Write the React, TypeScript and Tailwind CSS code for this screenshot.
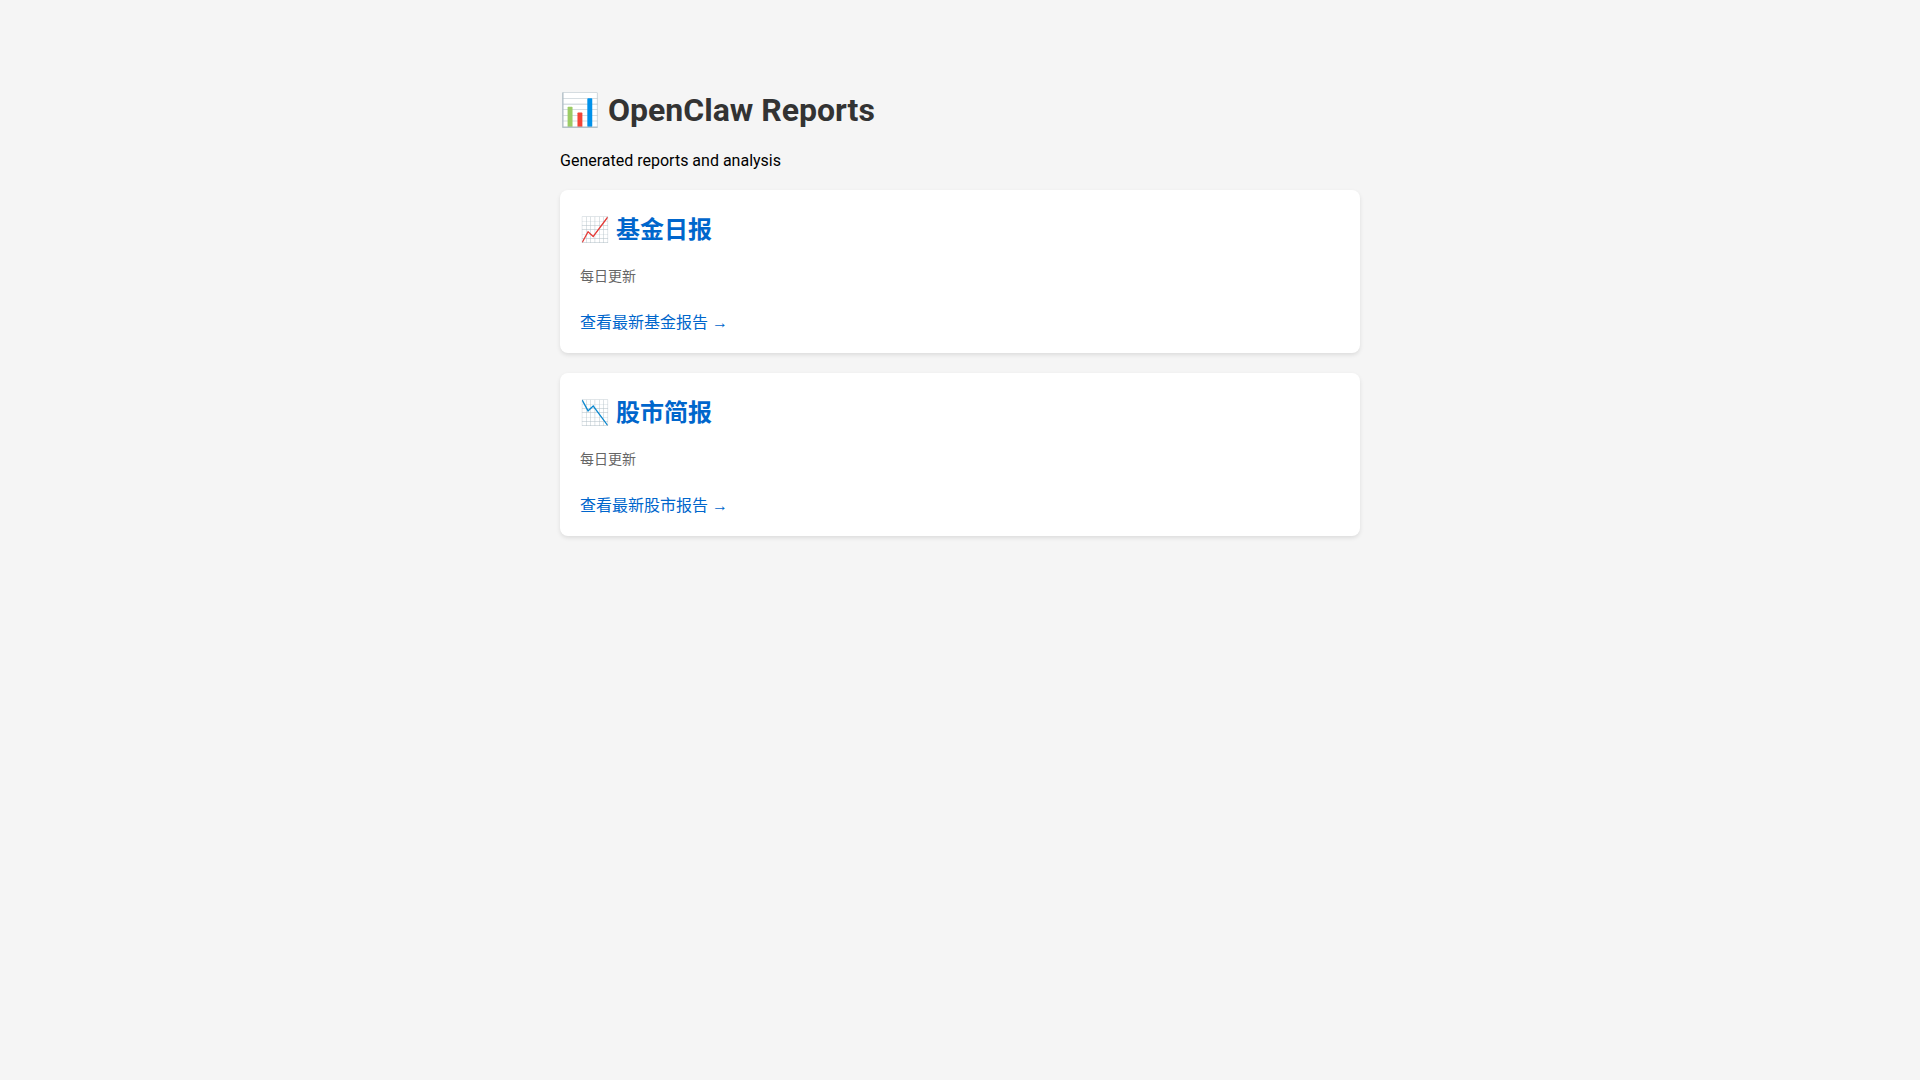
const reports = [
  { icon: "📈", title: "基金日报", linkText: "查看最新基金报告 →", href: "#fund" },
  { icon: "📉", title: "股市简报", linkText: "查看最新股市报告 →", href: "#stock" },
];

export default function App() {
  return (
    <div
      lang="zh-CN"
      className="min-h-screen bg-[#f5f5f5] px-5 py-[91px] font-[Roboto,'Liberation_Sans','Noto_Sans_CJK_SC',sans-serif] leading-[normal] text-black"
    >
      <main className="mx-auto max-w-[800px]">
        <h1 className="text-[32px] font-bold text-[#333]">📊 OpenClaw Reports</h1>
        <p className="mt-[22px] mb-5">Generated reports and analysis</p>

        <div className="space-y-5">
          {reports.map((report) => (
            <section key={report.title} className="rounded-lg bg-white p-5 shadow-[0_2px_4px_rgba(0,0,0,0.1)]">
              <h2 className="text-[24px] font-bold text-[#0066cc]">
                {report.icon} {report.title}
              </h2>
              <p className="mt-5 mb-3.5 text-[14px] text-[#666]">每日更新</p>
              <a href={report.href} className="mt-2.5 inline-block text-[#0066cc] hover:underline">
                {report.linkText}
              </a>
            </section>
          ))}
        </div>
      </main>
    </div>
  );
}
